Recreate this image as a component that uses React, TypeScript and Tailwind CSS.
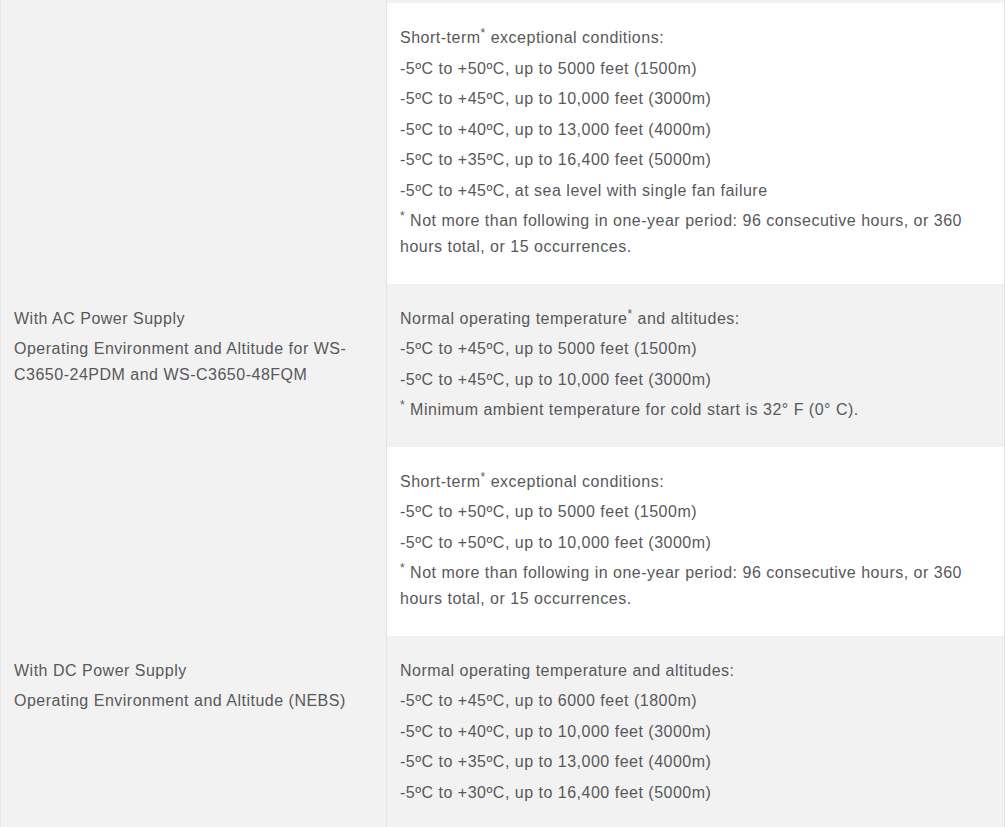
import React from "react";

const Sup = () => <span className="relative -top-[6px] text-[12px] leading-none">*</span>;

function Lines({ items }: { items: React.ReactNode[] }) {
  return (
    <div className="flex flex-col gap-[4.5px]">
      {items.map((it, i) => (
        <p key={i} className="leading-[26px]">
          {it}
        </p>
      ))}
    </div>
  );
}

const Cell = ({ children, gray }: { children: React.ReactNode; gray?: boolean }) => (
  <div className={`${gray ? "bg-[#f2f2f2]" : "bg-white"} pl-[13px] pr-[13px] pt-[22px] pb-[23.5px]`}>{children}</div>
);

export default function App() {
  const footnote = (
    <>
      <Sup /> Not more than following in one-year period: 96 consecutive hours, or 360
      <br />
      hours total, or 15 occurrences.
    </>
  );
  return (
    <div
      className="w-[1005px] border-x border-[#e3e3e3] text-[16px] tracking-[0.5px] text-[#58585b] bg-white"
      style={{ fontFamily: '"Liberation Sans", Arial, sans-serif' }}
    >
      {/* Section 1 */}
      <div className="flex">
        <div className="w-[386px] shrink-0 bg-[#f2f2f2] border-r border-[#e3e3e3]" />
        <div className="flex-1 flex flex-col">
          <div className="h-[3px] bg-[#f2f2f2]" />
          <Cell>
            <Lines
              items={[
                <>Short-term<Sup /> exceptional conditions:</>,
                "-5ºC to +50ºC, up to 5000 feet (1500m)",
                "-5ºC to +45ºC, up to 10,000 feet (3000m)",
                "-5ºC to +40ºC, up to 13,000 feet (4000m)",
                "-5ºC to +35ºC, up to 16,400 feet (5000m)",
                "-5ºC to +45ºC, at sea level with single fan failure",
                footnote,
              ]}
            />
          </Cell>
        </div>
      </div>
      {/* Section 2 */}
      <div className="flex">
        <div className="w-[386px] shrink-0 bg-[#f2f2f2] border-r border-[#e3e3e3] pl-[13px] pr-[13px] pt-[22px]">
          <Lines
            items={[
              "With AC Power Supply",
              <>Operating Environment and Altitude for WS-<br />C3650-24PDM and WS-C3650-48FQM</>,
            ]}
          />
        </div>
        <div className="flex-1 flex flex-col">
          <Cell gray>
            <Lines
              items={[
                <>Normal operating temperature<Sup /> and altitudes:</>,
                "-5ºC to +45ºC, up to 5000 feet (1500m)",
                "-5ºC to +45ºC, up to 10,000 feet (3000m)",
                <><Sup /> Minimum ambient temperature for cold start is 32° F (0° C).</>,
              ]}
            />
          </Cell>
          <Cell>
            <Lines
              items={[
                <>Short-term<Sup /> exceptional conditions:</>,
                "-5ºC to +50ºC, up to 5000 feet (1500m)",
                "-5ºC to +50ºC, up to 10,000 feet (3000m)",
                footnote,
              ]}
            />
          </Cell>
        </div>
      </div>
      {/* Section 3 */}
      <div className="flex">
        <div className="w-[386px] shrink-0 bg-[#f2f2f2] border-r border-[#e3e3e3] pl-[13px] pr-[13px] pt-[22px]">
          <Lines items={["With DC Power Supply", "Operating Environment and Altitude (NEBS)"]} />
        </div>
        <div className="flex-1 flex flex-col">
          <Cell gray>
            <Lines
              items={[
                "Normal operating temperature and altitudes:",
                "-5ºC to +45ºC, up to 6000 feet (1800m)",
                "-5ºC to +40ºC, up to 10,000 feet (3000m)",
                "-5ºC to +35ºC, up to 13,000 feet (4000m)",
                "-5ºC to +30ºC, up to 16,400 feet (5000m)",
              ]}
            />
          </Cell>
        </div>
      </div>
    </div>
  );
}
